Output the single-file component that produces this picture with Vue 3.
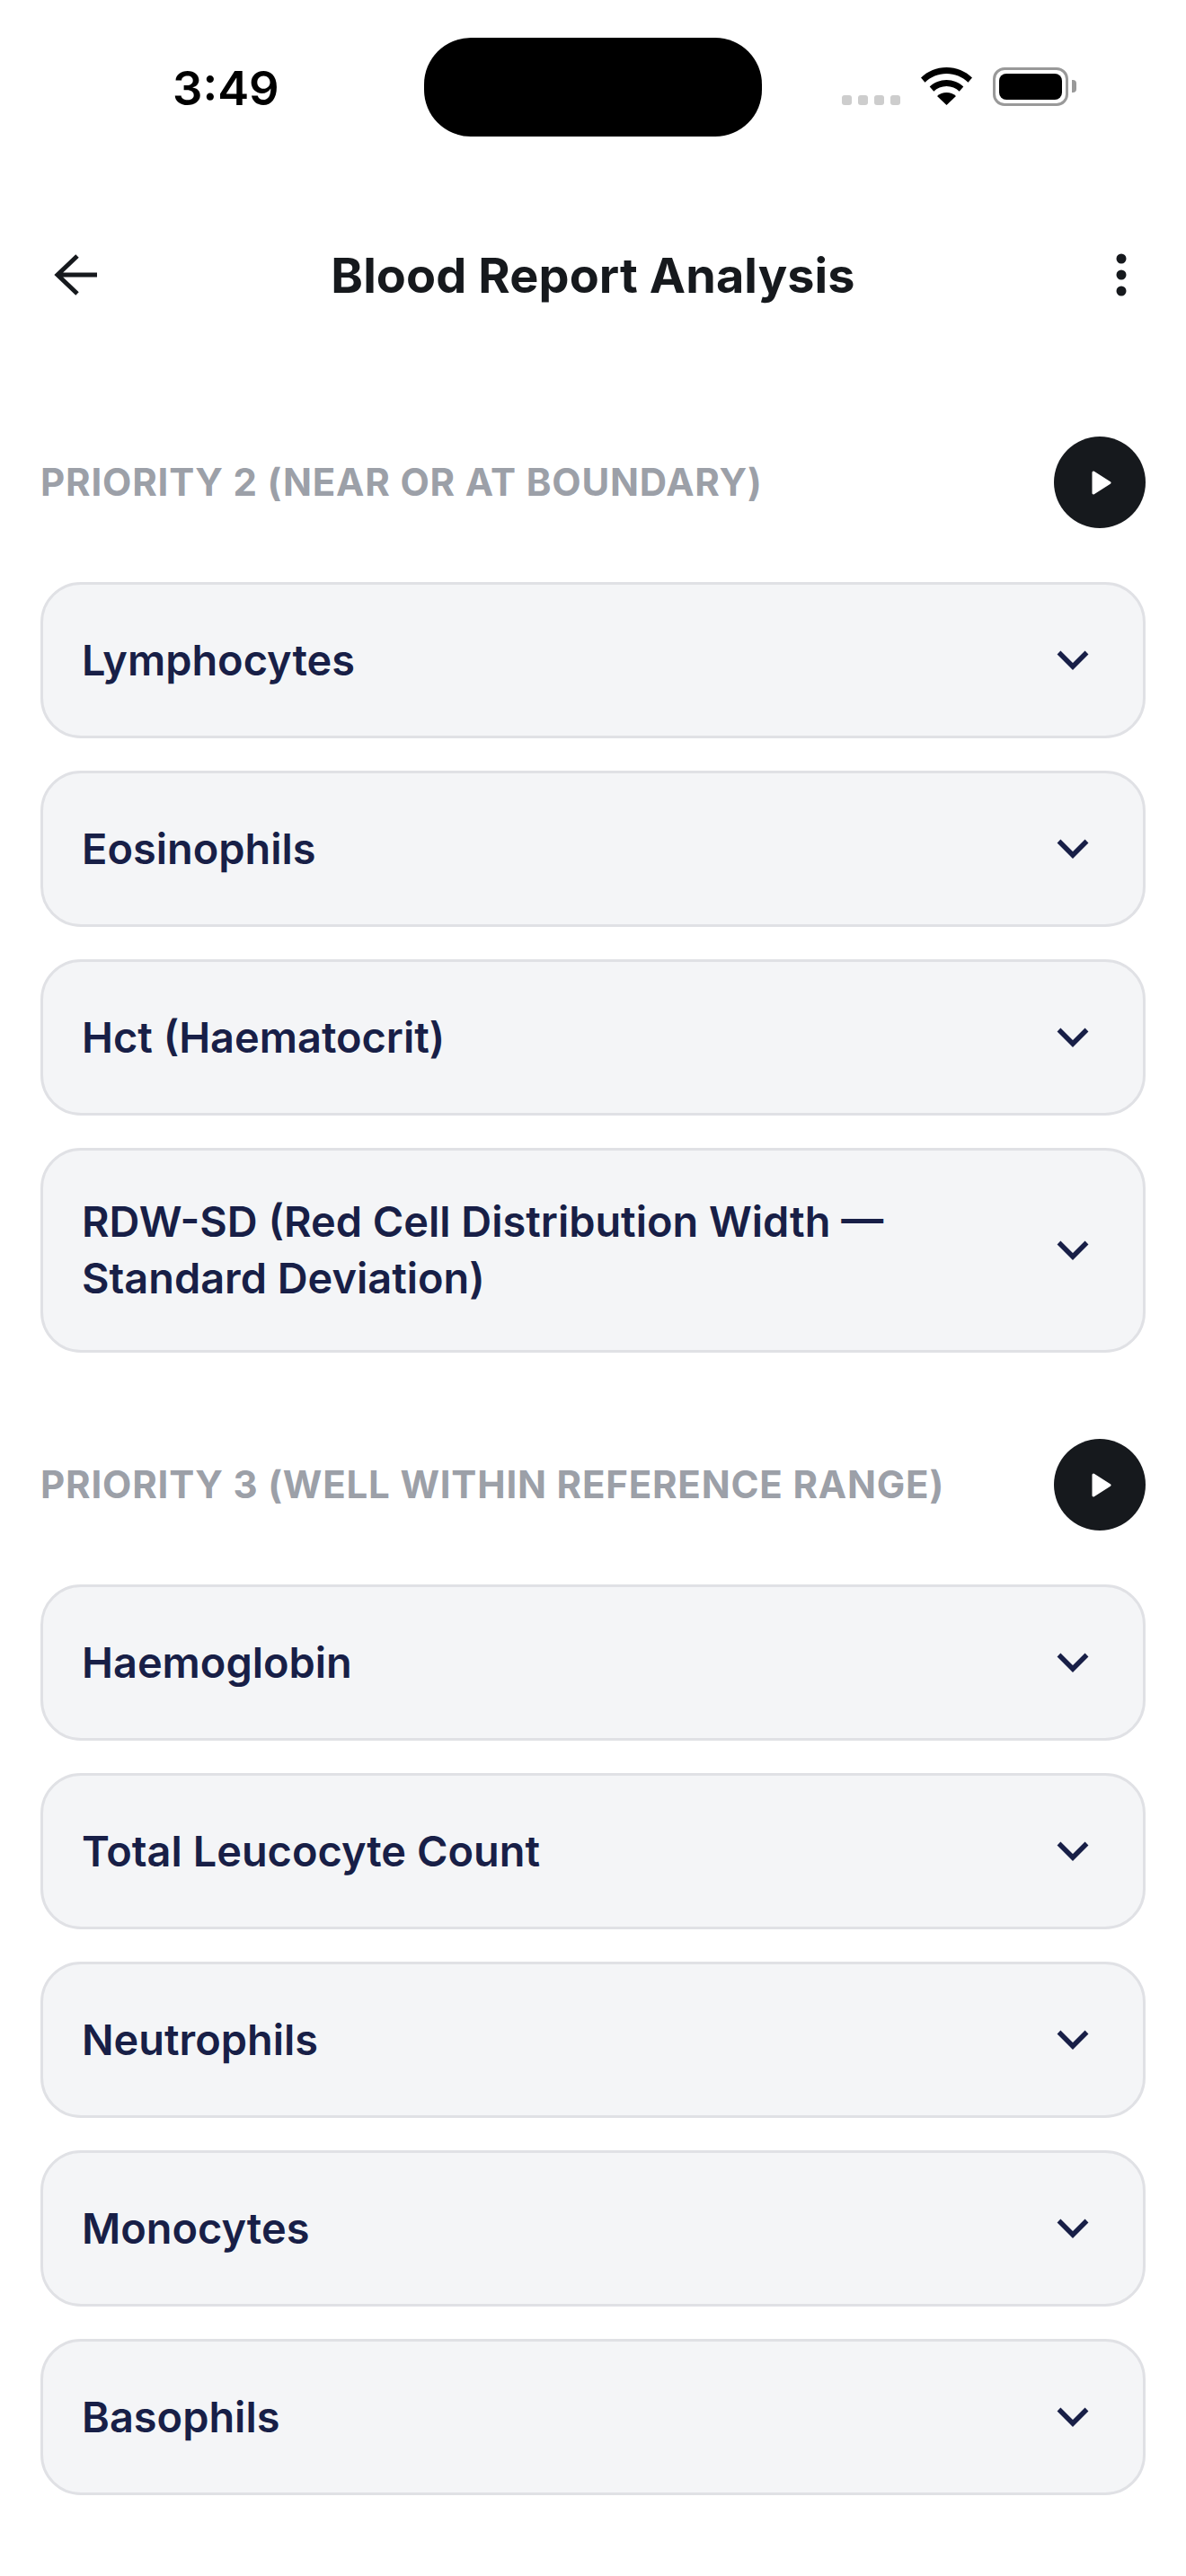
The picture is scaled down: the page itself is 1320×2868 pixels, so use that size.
<script setup>
const sections = [
  {
    title: 'PRIORITY 2 (NEAR OR AT BOUNDARY)',
    items: ['Lymphocytes', 'Eosinophils', 'Hct (Haematocrit)', 'RDW-SD (Red Cell Distribution Width — Standard Deviation)'],
  },
  {
    title: 'PRIORITY 3 (WELL WITHIN REFERENCE RANGE)',
    items: ['Haemoglobin', 'Total Leucocyte Count', 'Neutrophils', 'Monocytes', 'Basophils'],
  },
]
</script>

<template>
  <div class="screen">
    <div class="status">
      <span class="time">3:49</span>
      <div class="island"></div>
      <div class="dots"><i></i><i></i><i></i><i></i></div>
      <svg class="wifi" viewBox="0 0 57 42" width="57" height="42">
        <path d="M28.5 0C17.5 0 7.6 4.2 0 11.5l4.5 5.2C11 10.6 19.3 7 28.5 7s17.5 3.6 24 9.7l4.5-5.2C49.4 4.2 39.5 0 28.5 0Z" fill="#000"/>
        <path d="M28.5 14c-7.2 0-13.8 2.8-18.8 7.4l4.6 5.3c3.7-3.4 8.700-5.600 14.200-5.600s10.500 2.200 14.200 5.600l4.600-5.300C42.300 16.800 35.700 14 28.500 14Z" fill="#000"/>
        <path d="M28.500 28c-4 0-7.700 1.500-10.500 4l10.500 10L39 32c-2.800-2.500-6.500-4-10.500-4Z" fill="#000"/>
      </svg>
      <div class="battery"><div class="level"></div></div>
      <div class="tip"></div>
    </div>

    <header class="nav">
      <svg class="back" viewBox="0 0 48 48" width="48" height="48">
        <path d="M48 24H4M26 3 4 24l22 21" fill="none" stroke="#16191d" stroke-width="5"/>
      </svg>
      <h1>Blood Report Analysis</h1>
      <svg class="more" viewBox="0 0 12 48" width="12" height="48">
        <circle cx="6" cy="6" r="5.500" fill="#16191d"/>
        <circle cx="6" cy="24" r="5.500" fill="#16191d"/>
        <circle cx="6" cy="42" r="5.500" fill="#16191d"/>
      </svg>
    </header>

    <main class="content">
      <section v-for="s in sections" :key="s.title" class="section">
        <div class="section-head">
          <h2>{{ s.title }}</h2>
          <button class="play" type="button" aria-label="Play">
            <svg viewBox="0 0 22 27" width="22" height="27">
              <path d="M2 2 20 13.500 2 25Z" fill="#fff" stroke="#fff" stroke-width="3" stroke-linejoin="round"/>
            </svg>
          </button>
        </div>
        <div class="list">
          <div v-for="item in s.items" :key="item" class="card">
            <span class="label">{{ item }}</span>
            <svg class="chev" viewBox="0 0 36 22" width="36" height="22">
              <path d="M2.500 2.500 18 18 33.500 2.500" fill="none" stroke="#181f47" stroke-width="5.500"/>
            </svg>
          </div>
        </div>
      </section>
    </main>
  </div>
</template>

<style>
html, body { margin: 0; background: #fff; }
</style>

<style scoped>
.screen {
  width: 1320px;
  height: 2868px;
  background: #fff;
  font-family: Inter, "Liberation Sans", sans-serif;
  overflow: hidden;
}
.status {
  position: relative;
  height: 268px;
}
.time {
  position: absolute;
  left: 192px;
  top: 68px;
  font-size: 52.500px;
  line-height: 60px;
  font-weight: 600;
  color: #000;
}
.island {
  position: absolute;
  left: 472px;
  top: 42px;
  width: 376px;
  height: 110px;
  border-radius: 52px;
  background: #000;
}
.dots {
  position: absolute;
  left: 937px;
  top: 106px;
  display: flex;
  gap: 7px;
}
.dots i {
  width: 11px;
  height: 11px;
  border-radius: 3px;
  background: #cdcdcd;
}
.wifi {
  position: absolute;
  left: 1025px;
  top: 75px;
}
.battery {
  position: absolute;
  left: 1105px;
  top: 75px;
  width: 84px;
  height: 43px;
  box-sizing: border-box;
  border: 3px solid #999;
  border-radius: 13px;
  padding: 4px;
}
.level {
  height: 100%;
  border-radius: 8px;
  background: #000;
}
.tip {
  position: absolute;
  left: 1193px;
  top: 89px;
  width: 5px;
  height: 14px;
  border-radius: 0 4px 4px 0;
  background: #999;
}
.nav {
  height: 76px;
  padding: 0 60px;
  display: grid;
  grid-template-columns: 1fr auto 1fr;
  align-items: center;
}
.nav h1 {
  margin: 0;
  padding-top: 2px;
  font-size: 54px;
  line-height: 74px;
  font-weight: 700;
  letter-spacing: 0.1px;
  color: #16191d;
}
.more {
  justify-self: end;
  margin-right: 6px;
}
.content {
  padding: 0 45px;
  margin-top: 142px;
}
.section + .section {
  margin-top: 96px;
}
.section-head {
  display: flex;
  align-items: center;
  justify-content: space-between;
  margin-bottom: 60px;
}
.section-head h2 {
  margin: 0;
  font-size: 42px;
  line-height: 60px;
  font-weight: 650;
  letter-spacing: 0.8px;
  color: #9ca0a8;
}
.play {
  width: 102px;
  height: 102px;
  padding: 0 0 0 4px;
  border: 0;
  border-radius: 50%;
  background: #16191d;
  display: flex;
  align-items: center;
  justify-content: center;
}
.list {
  display: flex;
  flex-direction: column;
  gap: 36px;
}
.card {
  min-height: 174px;
  box-sizing: border-box;
  padding: 48px 42px 48px 43px;
  border: 3px solid #e0e1e5;
  border-radius: 45px;
  background: #f4f5f7;
  display: flex;
  align-items: center;
  justify-content: space-between;
  gap: 60px;
}
.label {
  max-width: 960px;
  font-size: 46.900px;
  line-height: 63px;
  font-weight: 640;
  color: #181f47;
}
.chev {
  flex: none;
  margin-right: 18px;
}
</style>
